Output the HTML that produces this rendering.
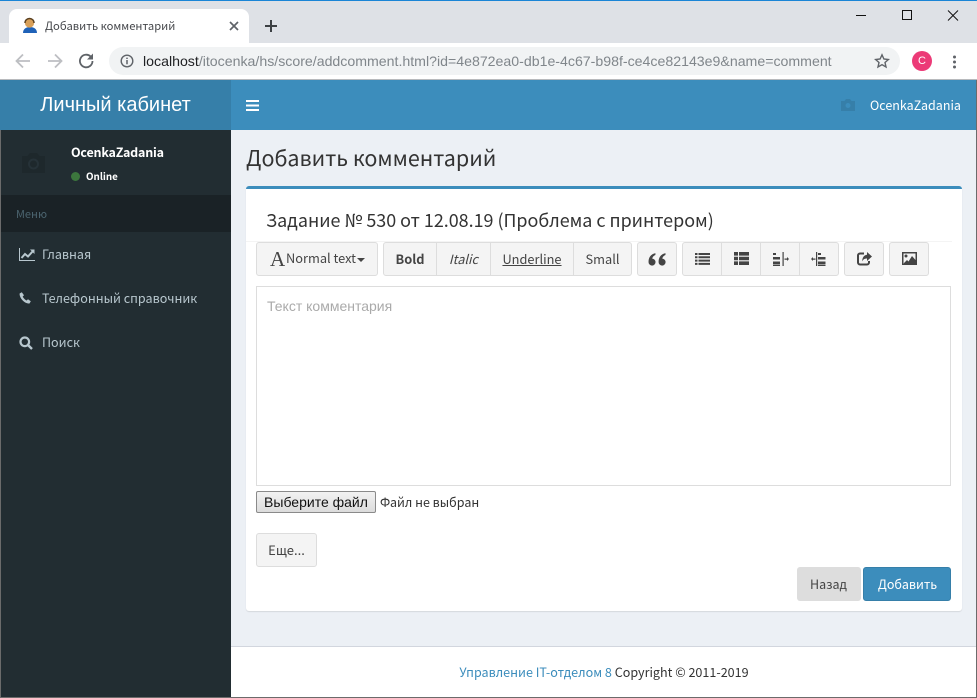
<!DOCTYPE html>
<html lang="ru"><head><meta charset="utf-8"><title>Добавить комментарий</title>
<style>
html,body{margin:0;padding:0;width:977px;height:698px;overflow:hidden;background:#ecf0f5}
*{box-sizing:border-box}
body{font-family:"Noto Sans CJK JP","Liberation Sans",sans-serif;position:relative}
.a{position:absolute;white-space:nowrap}
.l{font-family:"Liberation Sans","Noto Sans CJK JP",sans-serif}
.b{position:absolute;top:242px;height:34px;background:#f4f4f4;border:1px solid #ddd;font-size:12.8px;line-height:32px;text-align:center;color:#444;white-space:nowrap}
svg{position:absolute;display:block}
</style></head><body>
<!-- browser chrome -->
<div class="a" style="left:0;top:0;width:977px;height:43px;background:#dee1e6"></div>
<div class="a" style="left:0;top:0;width:977px;height:1px;background:#1a85d6"></div>
<div class="a" style="left:9px;top:9px;width:240px;height:34px;background:#fff;border-radius:8px 8px 0 0"></div>
<svg style="left:22px;top:17px" width="16" height="17" viewBox="0 0 16 17"><path d="M1 16c0-4 3-6 7-6s7 2 7 6z" fill="#1f62b8"/><circle cx="7.500" cy="6" r="4.600" fill="#d8a05a"/><path d="M3 6c0-6 9-6 9 0" fill="none" stroke="#5a4020" stroke-width="1.500"/></svg>
<div class="a" style="left:45px;top:17px;font-size:11.200px;line-height:18px;color:#45474b">Добавить комментарий</div>
<svg style="left:228px;top:20px" width="12" height="12" viewBox="0 0 12 12"><path d="M2 2l8 8M10 2l-8 8" stroke="#5f6368" stroke-width="1.700"/></svg>
<svg style="left:264px;top:19px" width="14" height="14" viewBox="0 0 14 14"><path d="M7 1v12M1 7h12" stroke="#3c4043" stroke-width="2"/></svg>
<svg style="left:856px;top:10px" width="110" height="12" viewBox="0 0 110 12"><path d="M0 5.500h10" stroke="#111" stroke-width="1"/><rect x="46.500" y="0.500" width="9" height="9" fill="none" stroke="#111"/><path d="M92 0.500l10 10M102 0.500l-10 10" stroke="#111" stroke-width="1"/></svg>
<div class="a" style="left:0;top:43px;width:977px;height:36px;background:#fff"></div>
<div class="a" style="left:0;top:79px;width:977px;height:1px;background:#b8babd"></div>
<svg style="left:14px;top:51px" width="80" height="20" viewBox="0 0 80 20"><path d="M16 10H3M9 3.500L2.500 10 9 16.500" fill="none" stroke="#bdbfc2" stroke-width="1.800"/><path d="M34 10h13M41 3.500l6.500 6.500-6.500 6.500" fill="none" stroke="#bdbfc2" stroke-width="1.800"/><path d="M78.500 10a6.300 6.300 0 1 1-1.900-4.500" fill="none" stroke="#5f6368" stroke-width="1.800"/><path d="M79 2.500v6h-6z" fill="#5f6368"/></svg>
<div class="a" style="left:109px;top:47px;width:791px;height:28px;border-radius:14px;background:#f1f3f4"></div>
<svg style="left:120px;top:54px" width="14" height="14" viewBox="0 0 14 14"><circle cx="7" cy="7" r="5.800" fill="none" stroke="#5f6368" stroke-width="1.400"/><path d="M7 6v4.200M7 3.600v1.400" stroke="#5f6368" stroke-width="1.500"/></svg>
<div class="a l" style="left:143px;top:52px;font-size:14.150px;line-height:18px;color:#80868b"><span style="color:#202124">localhost</span>/itocenka/hs/score/addcomment.html?id=4e872ea0-db1e-4c67-b98f-ce4ce82143e9&amp;name=comment</div>
<svg style="left:874px;top:53px" width="16" height="16" viewBox="0 0 16 16"><path d="M8 1.800l1.900 4.200 4.500.5-3.400 3 1 4.500L8 11.700l-4 2.300 1-4.500-3.400-3 4.500-.5z" fill="none" stroke="#5f6368" stroke-width="1.400"/></svg>
<div class="a l" style="left:912px;top:51px;width:20px;height:20px;border-radius:50%;background:#ec3a77;color:#fff;font-size:11px;line-height:20px;text-align:center">C</div>
<svg style="left:952px;top:55px" width="5" height="14" viewBox="0 0 5 14"><circle cx="2.500" cy="2" r="1.500" fill="#5f6368"/><circle cx="2.500" cy="7" r="1.500" fill="#5f6368"/><circle cx="2.500" cy="12" r="1.500" fill="#5f6368"/></svg>

<!-- header -->
<div class="a" style="left:0;top:80px;width:231px;height:50px;background:#367fa9"></div>
<div class="a" style="left:231px;top:80px;width:746px;height:50px;background:#3c8dbc"></div>
<div class="a l" style="left:0;top:80px;width:231px;text-align:center;font-size:20px;line-height:50px;color:#fff">Личный кабинет</div>
<svg style="left:246px;top:100px" width="13" height="11" viewBox="0 0 13 11"><path d="M0 0h13v2H0zM0 4.500h13v2H0zM0 9h13v2H0z" fill="#fff"/></svg>
<svg style="left:841px;top:98px" width="14" height="13" viewBox="0 0 14 13"><path d="M0 3h3.500L5 1h4l1.500 2H14v10H0z" fill="#367fa9"/><circle cx="7" cy="7.500" r="2.500" fill="#3c8dbc"/></svg>
<div class="a" style="left:870px;top:95px;font-size:12.500px;line-height:20px;color:#fff">OcenkaZadania</div>

<!-- sidebar -->
<div class="a" style="left:0;top:130px;width:231px;height:568px;background:#222d32"></div>
<svg style="left:22px;top:152px" width="23" height="21" viewBox="0 0 23 21"><path d="M0 4h5.500L8 1h7l2.500 3H23v17H0z" fill="#1e282c"/><circle cx="11.500" cy="12" r="4.500" fill="none" stroke="#263238" stroke-width="2"/></svg>
<div class="a" style="left:71px;top:142px;font-size:12.500px;line-height:20px;color:#fff;font-weight:700;letter-spacing:-.2px">OcenkaZadania</div>
<div class="a" style="left:71px;top:172px;width:9px;height:9px;border-radius:50%;background:#3c763d"></div>
<div class="a" style="left:86px;top:168px;font-size:9.800px;line-height:17px;color:#fff;font-weight:700">Online</div>
<div class="a" style="left:0;top:195px;width:231px;height:37px;background:#1a2226"></div>
<div class="a" style="left:16px;top:205px;font-size:11px;line-height:18px;color:#4b646f">Меню</div>
<svg style="left:19px;top:248px" width="16" height="13" viewBox="0 0 16 13"><path d="M.5 0v12.500H16" fill="none" stroke="#b8c7ce" stroke-width="1"/><path d="M2.500 10l3.500-4 3 2.500L14 3" fill="none" stroke="#b8c7ce" stroke-width="2"/><path d="M11 1.500h4.500V6z" fill="#b8c7ce"/></svg>
<div class="a" style="left:42px;top:244px;font-size:12.550px;line-height:20px;color:#b8c7ce">Главная</div>
<svg style="left:19px;top:292px" width="12" height="12" viewBox="0 0 12 12"><path d="M2.800.3L.6 1.500C.3 6 5.500 11.800 10.500 11.500l1.300-2.300L9 7.300 7.600 8.500C6 7.800 4.300 6 3.700 4.500L5 3.200z" fill="#b8c7ce"/></svg>
<div class="a" style="left:42px;top:288px;font-size:12.550px;line-height:20px;color:#b8c7ce">Телефонный справочник</div>
<svg style="left:19px;top:336px" width="14" height="14" viewBox="0 0 14 14"><circle cx="5.800" cy="5.800" r="4.300" fill="none" stroke="#b8c7ce" stroke-width="2.200"/><path d="M9 9l4 4" stroke="#b8c7ce" stroke-width="2.400"/></svg>
<div class="a" style="left:42px;top:332px;font-size:12.550px;line-height:20px;color:#b8c7ce">Поиск</div>

<!-- content -->
<div class="a" style="left:246px;top:143px;font-size:21.500px;line-height:30px;color:#333">Добавить комментарий</div>
<div class="a" style="left:246px;top:186px;width:716px;height:425px;background:#fff;border-top:3px solid #3c8dbc;border-radius:3px;box-shadow:0 1px 1px rgba(0,0,0,.1)"></div>
<div class="a" style="left:266px;top:207px;font-size:17.920px;line-height:26px;color:#333">Задание № 530 от 12.08.19 (Проблема с принтером)</div>
<div class="a" style="left:246px;top:241px;width:706px;height:1px;background:#f4f4f4"></div>

<!-- toolbar -->
<div class="b" style="left:256px;width:122px;border-radius:3px"><span class="a" style="left:13px;top:0;font-family:'Liberation Serif',serif;font-size:21px;line-height:32px">A</span><span class="a" style="left:29px;top:-1px">Normal text</span><span class="a" style="left:100px;top:15px;border:4px solid transparent;border-top-color:#444;border-bottom:0"></span></div>
<div class="b" style="left:383px;width:54px;border-radius:3px 0 0 3px;font-weight:700">Bold</div>
<div class="b" style="left:436px;width:55px;font-style:italic">Italic</div>
<div class="b" style="left:490px;width:84px;text-decoration:underline">Underline</div>
<div class="b" style="left:573px;width:59px;border-radius:0 3px 3px 0">Small</div>
<div class="b" style="left:637px;width:40px;border-radius:3px"><svg style="left:10px;top:10px" width="18" height="14" viewBox="0 0 17 13"><path d="M7 0C3 1 .5 3.500.5 8.500a3.300 3.300 0 1 0 3.500-3.300c.2-1.500 1.300-2.800 3-3.400zM16.500 0c-4 1-6.500 3.500-6.500 8.500a3.300 3.300 0 1 0 3.500-3.300c.2-1.500 1.300-2.800 3-3.400z" fill="#444"/></svg></div>
<div class="b" style="left:682px;width:40px;border-radius:3px 0 0 3px"><svg style="left:12px;top:9px" width="15" height="13" viewBox="0 0 15 13"><path d="M0 1h2.500v2H0zM3.500 1H15v2H3.500zM0 4.300h2.500v2H0zM3.500 4.300H15v2H3.500zM0 7.600h2.500v2H0zM3.500 7.600H15v2H3.500zM0 10.900h2.500v2H0zM3.500 10.900H15v2H3.500z" fill="#444"/></svg></div>
<div class="b" style="left:721px;width:40px"><svg style="left:12px;top:9px" width="15" height="13" viewBox="0 0 15 13"><path d="M0 0h4v3.600H0zM5 0h10v3.600H5zM0 4.700h4v3.600H0zM5 4.700h10v3.600H5zM0 9.400h4V13H0zM5 9.400h10V13H5z" fill="#444"/></svg></div>
<div class="b" style="left:760px;width:40px"><svg style="left:12px;top:9px" width="16" height="14" viewBox="0 0 16 14"><path d="M0 1h3v2H0zM0 5h7v2.500H0zM0 9.500h7V12H0zM0 12.500h7V14H0zM9.500 0h1.200v14H9.500zM11.500 6.500h2.500V5l2 2-2 2V7.700h-2.500z" fill="#444"/></svg></div>
<div class="b" style="left:799px;width:40px;border-radius:0 3px 3px 0"><svg style="left:11px;top:9px" width="16" height="14" viewBox="0 0 16 14"><path d="M7 1h3v2H7zM7 5h7.500v2.500H7zM7 9.500h7.500V12H7zM7 12.500h7.500V14H7zM5 0h1.200v14H5zM4.500 6.500H2V5L0 7l2 2V7.700h2.500z" fill="#444"/></svg></div>
<div class="b" style="left:844px;width:40px;border-radius:3px"><svg style="left:12px;top:9px" width="15" height="14" viewBox="0 0 15 14"><path d="M7 1.500H3A2 2 0 0 0 1 3.500v7a2 2 0 0 0 2 2h7a2 2 0 0 0 2-2V9" fill="none" stroke="#444" stroke-width="2"/><path d="M10 0l5 4.500L10 9V6.500C7.500 6.500 6 7.500 5.200 9.500 5.200 5.500 7 3 10 2.700z" fill="#444"/></svg></div>
<div class="b" style="left:889px;width:40px;border-radius:3px"><svg style="left:12px;top:9px" width="15" height="13" viewBox="0 0 15 13"><path fill-rule="evenodd" d="M0 0h15v13H0zM1.500 1.500v10h12v-10z" fill="#444"/><circle cx="4" cy="4" r="1.500" fill="#444"/><path d="M2 11l3-3 1.500 1.500L10 4l3.500 4v3.500H2z" fill="#444"/></svg></div>

<!-- textarea -->
<div class="a" style="left:256px;top:286px;width:695px;height:200px;border:1px solid #ddd;background:#fff"></div>
<div class="a l" style="left:267px;top:296px;font-size:14px;line-height:20px;color:#aaa">Текст комментария</div>

<!-- file input -->
<div class="a l" style="left:256px;top:491px;width:120px;height:22px;background:linear-gradient(#f2f2f2,#dcdcdc);border:1px solid #8a8a8a;border-radius:2px;font-size:14px;line-height:20px;text-align:center;color:#111">Выберите файл</div>
<div class="a" style="left:380px;top:492px;font-size:12.500px;line-height:20px;color:#333">Файл не выбран</div>
<div class="a" style="left:256px;top:533px;width:61px;height:34px;background:#f4f4f4;border:1px solid #ddd;border-radius:3px;font-size:13px;line-height:32px;text-align:center;color:#444">Еще...</div>
<div class="a" style="left:797px;top:567px;width:64px;height:34px;background:#ddd;border-radius:3px;font-size:12.500px;line-height:34px;text-align:center;color:#444;padding-right:1px">Назад</div>
<div class="a" style="left:863px;top:567px;width:88px;height:34px;background:#3c8dbc;border:1px solid #367fa9;border-radius:3px;font-size:12.500px;line-height:32px;text-align:center;color:#fff;padding-left:1px">Добавить</div>

<!-- footer -->
<div class="a" style="left:231px;top:646px;width:746px;height:51px;background:#fff;border-top:1px solid #d2d6de"></div>
<div class="a" style="left:231px;top:662px;width:746px;text-align:center;font-size:12.570px;line-height:20px;color:#333"><span style="color:#3c8dbc">Управление IT-отделом 8</span> Copyright © 2011-2019</div>

<!-- window edges -->
<div class="a" style="left:0;top:697px;width:977px;height:1px;background:#6b6b6b"></div>
<div class="a" style="left:0;top:130px;width:1px;height:568px;background:#6b6b6b"></div>
<div class="a" style="left:976px;top:80px;width:1px;height:618px;background:#6b6b6b"></div>
</body></html>
